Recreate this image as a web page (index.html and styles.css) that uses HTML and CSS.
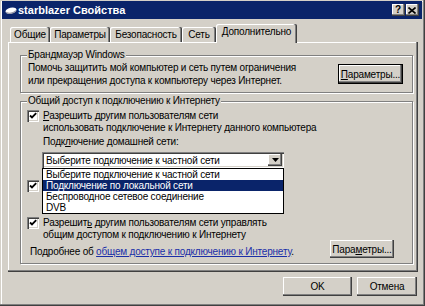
FILE: index.html
```html
<!DOCTYPE html>
<html lang="ru">
<head>
<meta charset="utf-8">
<title>starblazer Свойства</title>
<link rel="stylesheet" href="styles.css">
</head>
<body>
<div class="window">
  <div class="titlebar">
    <svg class="app-icon" width="12" height="9" viewBox="0 0 12 9">
      <ellipse cx="6" cy="4.6" rx="5.6" ry="2.9" transform="rotate(-14 6 4.6)" fill="#ffffff"/>
      <path d="M1.2 6.2 C3.5 8 8.5 7.6 11 4.6" stroke="#9a9aa6" stroke-width="1.2" fill="none"/>
    </svg>
    <span class="title">starblazer Свойства</span>
    <div class="tbtns">
      <span class="tbtn">?</span>
      <span class="tbtn"><svg width="8" height="7" viewBox="0 0 8 7"><path d="M0.5 0.5 L7.5 6.5 M7.5 0.5 L0.5 6.5" stroke="#000" stroke-width="1.6"/></svg></span>
    </div>
  </div>
  <div class="client">
    <div class="tabs">
      <div class="tab t1">Общие</div>
      <div class="tab t2">Параметры</div>
      <div class="tab t3">Безопасность</div>
      <div class="tab t4">Сеть</div>
      <div class="tab t5 active">Дополнительно</div>
    </div>
    <div class="panel">
      <fieldset class="group g1">
        <legend>Брандмауэр Windows</legend>
        <div class="fw-row">
          <p class="fw-text">Помочь защитить мой компьютер и сеть путем ограничения<br>или прекращения доступа к компьютеру через Интернет.</p>
          <button class="btn default fw-btn"><u>П</u>араметры...</button>
        </div>
      </fieldset>
      <fieldset class="group g2">
        <legend>Общий доступ к подключению к Интернету</legend>
        <div class="check c1">
          <span class="box"><svg width="12" height="12" viewBox="0 0 12 12"><path d="M3 5.5 L5 7.5 L9.2 3.2" stroke="#000" stroke-width="1.8" fill="none"/></svg></span>
          <span class="check-text"><u>Р</u>азрешить другим пользователям сети<br>использовать подключение к Интернету данного компьютера</span>
        </div>
        <div class="home-label">Подк<u>л</u>ючение домашней сети:</div>
        <div class="combo">
          <span class="combo-text">Выберите подключение к частной сети</span>
          <span class="combo-btn"><svg width="7" height="4" viewBox="0 0 7 4"><polygon points="0,0 7,0 3.5,4" fill="#000"/></svg></span>
          <ul class="droplist">
            <li>Выберите подключение к частной сети</li>
            <li class="sel">Подключение по локальной сети</li>
            <li>Беспроводное сетевое соединение</li>
            <li>DVB</li>
          </ul>
        </div>
        <div class="check c2">
          <span class="box"><svg width="12" height="12" viewBox="0 0 12 12"><path d="M3 5.5 L5 7.5 L9.2 3.2" stroke="#000" stroke-width="1.8" fill="none"/></svg></span>
          <span class="check-text blank"></span>
        </div>
        <div class="check c3">
          <span class="box"><svg width="12" height="12" viewBox="0 0 12 12"><path d="M3 5.5 L5 7.5 L9.2 3.2" stroke="#000" stroke-width="1.8" fill="none"/></svg></span>
          <span class="check-text">Разрешит<u>ь</u> другим пользователям сети управлять<br>общим доступом к подключению к Интернету</span>
        </div>
        <div class="more-row">
          <span class="more-text">Подробнее об <a href="#" class="link">общем доступе к подключению к Интернету</a>.</span>
          <button class="btn more-btn">Пара<u>м</u>етры...</button>
        </div>
      </fieldset>
    </div>
    <div class="footer">
      <button class="btn ok">OK</button>
      <button class="btn cancel">Отмена</button>
    </div>
  </div>
</div>
</body>
</html>
```
FILE: styles.css
```css
* { box-sizing: border-box; }
html, body { margin: 0; padding: 0; }
body {
  width: 425px;
  height: 306px;
  overflow: hidden;
  background: #d4d0c8;
  font-family: "Liberation Sans", Arial, sans-serif;
  font-size: 10px;
  letter-spacing: -0.2px;
  color: #000;
}
.window {
  width: 425px;
  height: 306px;
  padding: 1px 3px 3px 2px;
  background: #d4d0c8;
  box-shadow: inset -1px -1px #404040, inset -2px -2px #808080, inset 1px 1px #d4d0c8, inset 2px 2px #ffffff;
}
.titlebar {
  height: 18px;
  background: #0a246a;
  display: flex;
  align-items: center;
  padding: 0 3px;
  color: #fff;
}
.app-icon { width: 12px; height: 9px; margin-right: 1px; flex: none; }
.title {
  flex: 1;
  font-weight: bold;
  font-size: 11px;
  letter-spacing: 0;
  line-height: 18px;
}
.tbtns { display: flex; gap: 1px; }
.tbtn {
  width: 13px;
  height: 12px;
  background: #d4d0c8;
  box-shadow: inset -1px -1px #404040, inset -2px -2px #808080, inset 1px 1px #ffffff;
  display: flex;
  align-items: center;
  justify-content: center;
  color: #000;
  font-weight: bold;
  font-size: 10px;
  letter-spacing: 0;
  line-height: 10px;
  padding-right: 1px;
}
.client { padding: 5px 4px 0 6px; }
.tabs {
  display: flex;
  align-items: flex-end;
  height: 18px;
  padding-left: 2px;
  position: relative;
  z-index: 1;
}
.tab {
  height: 15px;
  padding-top: 2px;
  line-height: 12px;
  text-align: center;
  background: #d4d0c8;
  border-radius: 2px 2px 0 0;
  box-shadow: inset -1px 0 #404040, inset -2px 0 #808080, inset 1px 1px #ffffff;
  white-space: nowrap;
}
.t1 { width: 40px; }
.t2 { width: 60px; }
.t3 { width: 72px; }
.t4 { width: 34px; }
.t5 { width: 81px; }
.tab.active {
  height: 19px;
  margin-bottom: -1px;
}
.panel {
  height: 230px;
  padding: 7px 5px 0 12px;
  box-shadow: inset -1px -1px #404040, inset -2px -2px #808080, inset 1px 1px #ffffff;
}
.group {
  margin: 0;
  border: 1px solid #808080;
  box-shadow: inset 1px 1px #ffffff, 1px 1px #ffffff;
  padding: 0 9px 5px 6px;
  min-width: 0;
}
.group legend {
  padding: 0 1px;
  line-height: 12px;
  background: #d4d0c8;
}
.g2 { margin-top: 2px; }
.fw-row {
  display: flex;
  align-items: center;
  justify-content: space-between;
}
.fw-text {
  margin: 0 0 0 1px;
  line-height: 13px;
}
.btn {
  font-family: inherit;
  font-size: 10px;
  letter-spacing: -0.2px;
  color: #000;
  background: #d4d0c8;
  border: 0;
  padding: 0;
  margin: 0;
  box-shadow: inset -1px -1px #404040, inset -2px -2px #808080, inset 1px 1px #ffffff;
}
.btn.default {
  box-shadow: inset 0 0 0 1px #000, inset -2px -2px #404040, inset -3px -3px #808080, inset 2px 2px #ffffff;
}
.fw-btn { width: 65px; height: 20px; }
.check {
  display: flex;
  align-items: flex-start;
  gap: 4px;
}
.box {
  width: 12px;
  height: 12px;
  flex: none;
  background: #fff;
  box-shadow: inset 1px 1px #808080, inset 2px 2px #404040, inset -1px -1px #ffffff, inset -2px -2px #d4d0c8;
}
.box svg { display: block; }
.check-text { line-height: 12px; }
.check-text.blank { height: 24px; }
.c1 { margin-top: 3px; }
.home-label {
  margin: 2px 0 0 16px;
  line-height: 12px;
}
.combo {
  position: relative;
  margin: 4px 0 0 15px;
  width: 242px;
  height: 16px;
  padding: 2px 2px 2px 4px;
  background: #fff;
  box-shadow: inset 1px 1px #808080, inset 2px 2px #404040, inset -1px -1px #ffffff, inset -2px -2px #d4d0c8;
  display: flex;
  align-items: center;
}
.combo-text { flex: 1; line-height: 11px; }
.combo-btn {
  width: 14px;
  height: 12px;
  flex: none;
  background: #d4d0c8;
  box-shadow: inset -1px -1px #404040, inset -2px -2px #808080, inset 1px 1px #ffffff;
  display: flex;
  align-items: center;
  justify-content: center;
}
.combo-btn svg { display: block; }
.droplist {
  position: absolute;
  top: 100%;
  left: 0;
  z-index: 2;
  width: 242px;
  height: 46px;
  margin: 0;
  padding: 0;
  list-style: none;
  background: #fff;
  border: 1px solid #000;
}
.droplist li {
  line-height: 11px;
  height: 11px;
  padding-left: 3px;
  white-space: nowrap;
}
.droplist li.sel {
  background: #0a246a;
  color: #fff;
}
.c2 { margin-top: 12px; }
.c3 { margin-top: 13px; }
.more-row {
  display: flex;
  align-items: flex-end;
  justify-content: space-between;
  margin: -1px 9px 0 3px;
}
.more-text { line-height: 12px; }
.link { color: #1a2fa8; text-decoration: underline; }
.more-btn { width: 64px; height: 18px; }
.footer {
  display: flex;
  justify-content: flex-end;
  gap: 5px;
  margin-top: 5px;
  padding-right: 1px;
}
.ok { width: 69px; height: 19px; }
.cancel { width: 60px; height: 19px; }
```
